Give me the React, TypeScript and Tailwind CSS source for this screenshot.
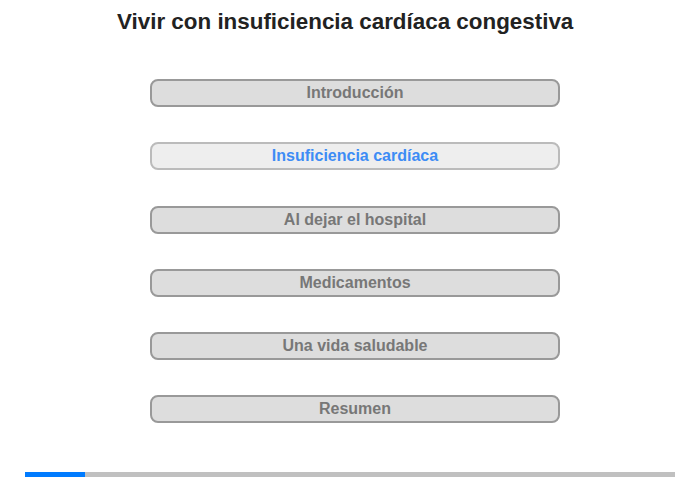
import React from "react";

const sections = [
  "Introducción",
  "Insuficiencia cardíaca",
  "Al dejar el hospital",
  "Medicamentos",
  "Una vida saludable",
  "Resumen",
];

const App = () => {
  const current = 1;

  return (
    <div className="w-[700px] h-[480px] bg-white font-['Liberation_Sans',Arial,sans-serif] flex flex-col">
      <h1 className="mt-[9px] ml-[117px] text-[22.4px] leading-[26px] font-bold text-[#222]">
        Vivir con insuficiencia cardíaca congestiva
      </h1>

      <div className="mt-[44px] flex flex-col gap-[35.3px] items-center pl-[10px]">
        {sections.map((name, i) => (
          <button
            key={name}
            className={
              i === current
                ? "w-[410px] h-[28px] rounded-[8px] border-2 border-[#bbb] bg-[#eee] text-[#3d8cf5] text-[16px] font-bold leading-[24px]"
                : "w-[410px] h-[28px] rounded-[8px] border-2 border-[#999] bg-[#ddd] text-[#777] text-[16px] font-bold leading-[24px]"
            }
          >
            {name}
          </button>
        ))}
      </div>

      <div className="mt-auto mb-[3px] mx-[25px] h-[5px] bg-[#c0c0c0] flex">
        <div className="w-[60px] h-full bg-[#007bff]" />
      </div>
    </div>
  );
};

export default App;
